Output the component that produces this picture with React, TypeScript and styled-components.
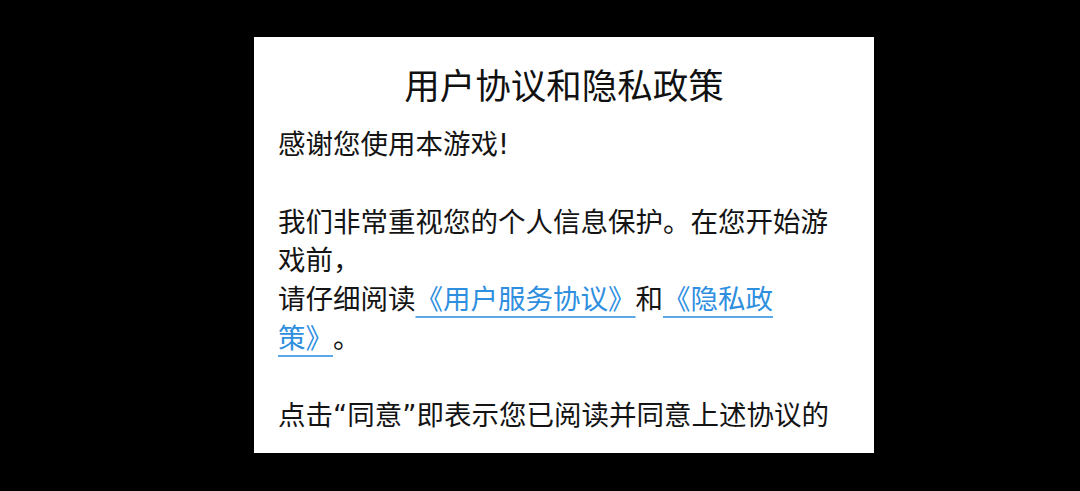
import React from 'react';
import styled, { createGlobalStyle } from 'styled-components';

const GlobalStyle = createGlobalStyle`
  html, body {
    margin: 0;
    padding: 0;
    background: #000;
  }
  body {
    font-family: 'DejaVu Sans', 'Noto Sans CJK SC', sans-serif;
    text-spacing-trim: space-all;
  }
`;

const Screen = styled.div`
  width: 1080px;
  height: 491px;
  background: #000;
  padding: 37px 0 0 254px;
  box-sizing: border-box;
  overflow: hidden;
`;

const Dialog = styled.div`
  width: 620px;
  height: 416px;
  background: #fff;
  box-sizing: border-box;
  padding: 0 24px;
  display: flex;
  flex-direction: column;
  overflow: hidden;
`;

const Title = styled.div`
  height: 88px;
  flex-shrink: 0;
  display: flex;
  align-items: center;
  justify-content: center;
  padding-top: 4px;
  box-sizing: border-box;
  font-size: 35.5px;
  color: #111;
`;

const Body = styled.div`
  height: 312px;
  overflow: hidden;
  font-size: 27.5px;
  line-height: 38.75px;
  color: #141414;
  white-space: pre-line;
  text-spacing-trim: space-all;
`;

const Link = styled.span`
  color: #2f8fdf;
  text-decoration: underline;
  text-decoration-color: #5aa8e8;
  text-decoration-thickness: 1.5px;
  text-underline-offset: 7px;
`;

const App = () => {
  return (
    <>
      <GlobalStyle />
      <Screen>
        <Dialog>
          <Title>用户协议和隐私政策</Title>
          <Body>
            {'感谢您使用本游戏!\n\n我们非常重视您的个人信息保护。在您开始游戏前，\n请仔细阅读'}
            <Link>《用户服务协议》</Link>和<Link>《隐私政策》</Link>
            {'。\n\n点击“同意”即表示您已阅读并同意上述协议的'}
          </Body>
        </Dialog>
      </Screen>
    </>
  );
};

export default App;
